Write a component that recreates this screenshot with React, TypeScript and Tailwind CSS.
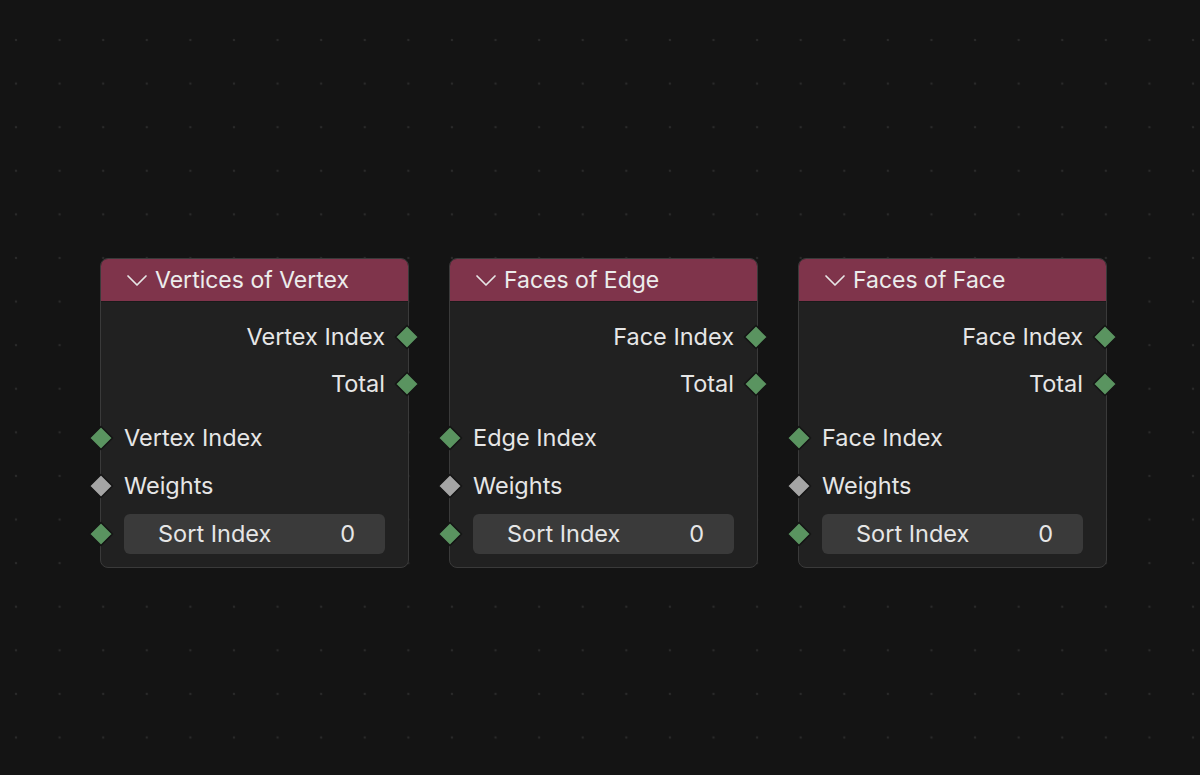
import React from "react";

type Socket = "green" | "gray";

type NodeDef = {
  title: string;
  outputs: string[];
  input: string;
};

const nodes: NodeDef[] = [
  { title: "Vertices of Vertex", outputs: ["Vertex Index", "Total"], input: "Vertex Index" },
  { title: "Faces of Edge", outputs: ["Face Index", "Total"], input: "Edge Index" },
  { title: "Faces of Face", outputs: ["Face Index", "Total"], input: "Face Index" },
];

// socket diamond sits on the node border
function Diamond({ socket, side }: { socket: Socket; side: "left" | "right" }) {
  const fill = socket === "green" ? "#5a9460" : "#a5a5a5";
  return (
    <svg
      width="26"
      height="26"
      viewBox="0 0 26 26"
      className={`absolute top-1/2 mt-[-13px] ${side === "left" ? "left-[-13px]" : "right-[-12px]"}`}
    >
      <polygon
        points="13,1.5 24.5,13 13,24.5 1.5,13"
        fill={fill}
        stroke="#141414"
        strokeWidth="1.6"
        strokeLinejoin="round"
      />
    </svg>
  );
}

function Chevron() {
  return (
    <svg width="22" height="13" viewBox="0 0 22 13" fill="none" className="shrink-0">
      <polyline
        points="2,2 11,11 20,2"
        stroke="#e6e6e6"
        strokeWidth="1.7"
        strokeLinecap="round"
        strokeLinejoin="round"
      />
    </svg>
  );
}

function Node({ node }: { node: NodeDef }) {
  return (
    <div className="relative h-[310px] w-[309px] rounded-[8px] border-[1.5px] border-[#3a3a3a] bg-[#212121]">
      <div className="flex h-[43px] items-center gap-[7px] rounded-t-[7px] border-b border-[#1a1a1a] bg-[#7f344b] pl-[25px] text-[23px] text-[#ececec]">
        <Chevron />
        <span className="leading-none">{node.title}</span>
      </div>
      <div className="pt-[11px]">
        {node.outputs.map((o) => (
          <div key={o} className="relative flex h-[47px] items-center justify-end pr-[23px]">
            <span>{o}</span>
            <Diamond socket="green" side="right" />
          </div>
        ))}
        <div className="h-[7px]" />
        <div className="relative flex h-[48px] items-center pl-[23px]">
          <span>{node.input}</span>
          <Diamond socket="green" side="left" />
        </div>
        <div className="relative flex h-[48px] items-center pl-[23px]">
          <span>Weights</span>
          <Diamond socket="gray" side="left" />
        </div>
        <div className="relative flex h-[48px] items-center px-[23px]">
          <div className="flex h-[40px] w-full items-center justify-between rounded-[6px] bg-[#3a3a3a] pl-[34px] pr-[30px]">
            <span>Sort Index</span>
            <span>0</span>
          </div>
          <Diamond socket="green" side="left" />
        </div>
      </div>
    </div>
  );
}

export default function App() {
  return (
    <div
      className="flex h-[775px] w-[1200px] items-start gap-[40px] overflow-hidden bg-[#141414] bg-[radial-gradient(circle,#2a2a2a_1.2px,transparent_1.6px)] bg-[length:43.6px_43.6px] bg-[position:-5.8px_18.2px] pl-[100px] pt-[258px] text-[23.5px] text-[#e6e6e6]"
      style={{ fontFamily: "Inter, 'Noto Sans', sans-serif" }}
    >
      {nodes.map((n) => (
        <Node key={n.title} node={n} />
      ))}
    </div>
  );
}
